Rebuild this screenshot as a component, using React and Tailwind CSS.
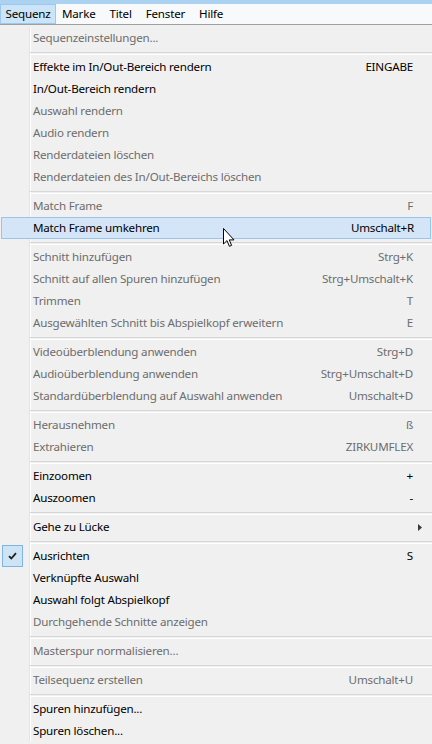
import React from "react";

const MENU = [
  [{ t: "Sequenzeinstellungen...", d: true }],
  [
    { t: "Effekte im In/Out-Bereich rendern", k: "EINGABE" },
    { t: "In/Out-Bereich rendern" },
    { t: "Auswahl rendern", d: true },
    { t: "Audio rendern", d: true },
    { t: "Renderdateien löschen", d: true },
    { t: "Renderdateien des In/Out-Bereichs löschen", d: true },
  ],
  [
    { t: "Match Frame", k: "F", d: true },
    { t: "Match Frame umkehren", k: "Umschalt+R", hl: true },
  ],
  [
    { t: "Schnitt hinzufügen", k: "Strg+K", d: true },
    { t: "Schnitt auf allen Spuren hinzufügen", k: "Strg+Umschalt+K", d: true },
    { t: "Trimmen", k: "T", d: true },
    { t: "Ausgewählten Schnitt bis Abspielkopf erweitern", k: "E", d: true },
  ],
  [
    { t: "Videoüberblendung anwenden", k: "Strg+D", d: true },
    { t: "Audioüberblendung anwenden", k: "Strg+Umschalt+D", d: true },
    { t: "Standardüberblendung auf Auswahl anwenden", k: "Umschalt+D", d: true },
  ],
  [
    { t: "Herausnehmen", k: "ß", d: true },
    { t: "Extrahieren", k: "ZIRKUMFLEX", d: true },
  ],
  [
    { t: "Einzoomen", k: "+" },
    { t: "Auszoomen", k: "-" },
  ],
  [{ t: "Gehe zu Lücke", sub: true }],
  [
    { t: "Ausrichten", k: "S", check: true },
    { t: "Verknüpfte Auswahl" },
    { t: "Auswahl folgt Abspielkopf" },
    { t: "Durchgehende Schnitte anzeigen", d: true },
  ],
  [{ t: "Masterspur normalisieren...", d: true }],
  [{ t: "Teilsequenz erstellen", k: "Umschalt+U", d: true }],
  [{ t: "Spuren hinzufügen..." }, { t: "Spuren löschen..." }],
];

const Gutter = ({ children }) => (
  <div className="w-[30px] h-full shrink-0 border-r border-[#e2e3e3] shadow-[1px_0_0_#ffffff] flex items-center">
    {children}
  </div>
);

const Check = () => (
  <div className="ml-[2px] w-[21px] h-[22px] bg-[#cde4f7] border border-[#7fb5e6] flex items-center justify-center">
    <svg width="9" height="8" viewBox="0 0 9 8">
      <path d="M1 4.2 L3.3 6.5 L8 1.2" fill="none" stroke="#1f1f1f" strokeWidth="1.8" />
    </svg>
  </div>
);

const Item = ({ item }) => {
  const color = item.d ? "text-[#6d6d6d]" : "text-black";
  if (item.hl) {
    return (
      <div className="h-[22px] mx-[1px] flex items-center bg-[#d3e5f7] border border-[#9bc4ea]">
        <div className="w-[28px] h-full shrink-0" />
        <span className={`pl-[3px] flex-1 ${color}`}>{item.t}</span>
        {item.k && <span className={`pr-[16px] ${color}`}>{item.k}</span>}
      </div>
    );
  }
  return (
    <div className="h-[22px] flex items-center">
      <Gutter>{item.check && <Check />}</Gutter>
      <span className={`pl-[3px] flex-1 ${color}`}>{item.t}</span>
      {item.k && <span className={`pr-[19px] ${color}`}>{item.k}</span>}
      {item.sub && (
        <svg className="mr-[10px]" width="4" height="7" viewBox="0 0 4 7">
          <path d="M0 0 L4 3.5 L0 7 Z" fill="#3a3a3a" />
        </svg>
      )}
    </div>
  );
};

const Separator = () => (
  <div className="h-[7px] flex items-center">
    <Gutter />
    <div className="flex-1 h-[2px] border-t border-[#d7d7d7] shadow-[0_1px_0_#ffffff]" />
  </div>
);

export default function App() {
  return (
    <div
      className="relative w-[432px] h-[744px] overflow-hidden bg-[#f0f0f0] text-[11.6px] tracking-[-0.2px] leading-none"
      style={{ fontFamily: '"Segoe UI", "Noto Sans", sans-serif' }}
    >
      <div className="h-[4px] bg-[#acd2f1]" />
      <div className="h-[21px] flex items-stretch bg-[#f7f9fb] border-b border-[#a0a0a0]">
        <div className="w-[56px] flex items-center justify-center bg-[#cce4f7] border border-[#9cc8ee] text-black">Sequenz</div>
        <div className="pl-[6px] pr-[7px] flex items-center text-black">Marke</div>
        <div className="px-[7px] flex items-center text-black">Titel</div>
        <div className="px-[7px] flex items-center text-black">Fenster</div>
        <div className="px-[7px] flex items-center text-black">Hilfe</div>
      </div>
      <div className="pt-[2px]">
        {MENU.map((group, gi) => (
          <React.Fragment key={gi}>
            {gi > 0 && <Separator />}
            {group.map((item, ii) => (
              <Item key={ii} item={item} />
            ))}
          </React.Fragment>
        ))}
      </div>
      <svg className="absolute left-[223px] top-[228px]" width="13" height="20" viewBox="0 0 13 20">
        <path
          d="M0.5 0.5 L0.5 16 L4 12.6 L6.4 18.3 L8.6 17.4 L6.3 11.9 L11 11.9 Z"
          fill="#ffffff"
          stroke="#000000"
          strokeWidth="1"
          strokeLinejoin="miter"
        />
      </svg>
    </div>
  );
}
